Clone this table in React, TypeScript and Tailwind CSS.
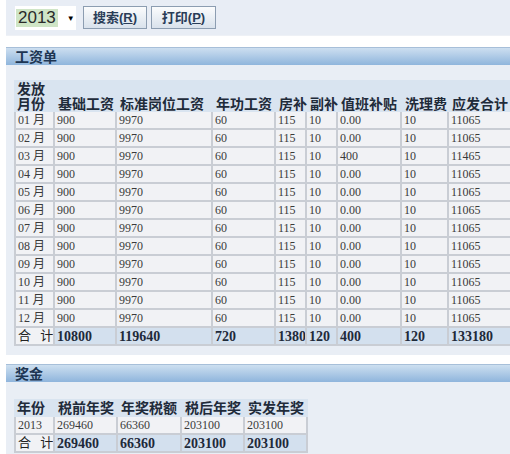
const cjk = "font-['Liberation_Serif','Noto_Sans_CJK_SC',serif]";
const cjkSans = "font-['Liberation_Sans','Noto_Sans_CJK_SC',sans-serif]";

const months = ['01', '02', '03', '04', '05', '06', '07', '08', '09', '10', '11', '12'];

const salaryCols = [
  'w-[41px]',
  'w-[62px]',
  'w-[96px]',
  'w-[63px]',
  'w-[31px]',
  'w-[31px]',
  'w-[64px]',
  'w-[47px]',
  'w-[70px]',
];

const bonusCols = ['w-[41px]', 'w-[63px]', 'w-[64px]', 'w-[63px]', 'w-[63px]'];

function Bar({ title }: { title: string }) {
  return (
    <div className="h-[18px] border-t border-[#a7bfd9] bg-gradient-to-b from-[#cddff0] to-[#8fb5dc] pl-[9px] flex items-center">
      <span className={`${cjkSans} text-[14px] font-bold text-[#1d3552] leading-none`}>{title}</span>
    </div>
  );
}

function Row({
  cells,
  cols,
  total,
}: {
  cells: string[];
  cols: string[];
  total?: boolean;
}) {
  return (
    <div className="flex h-[18px]">
      {cells.map((c, i) => {
        const first = i === 0;
        const bg = total && !first ? 'bg-[#d3e0ee]' : 'bg-[#f1f2f5]';
        const txt = total
          ? first
            ? 'text-[13px] text-[#222] tracking-[3px]'
            : 'text-[14px] font-bold text-[#1e2a3a]'
          : 'text-[12px] text-[#3a3a3a]';
        return (
          <div
            key={i}
            className={`${cols[i]} ${bg} ${first ? 'border-l-2' : ''} border-r-2 border-b-2 border-[#c9cdd4] pl-[2px] flex items-center shrink-0 overflow-hidden whitespace-nowrap ${cjk} ${txt}`}
          >
            {c}
          </div>
        );
      })}
    </div>
  );
}

export default function App() {
  return (
    <div className="w-[510px] h-[454px] bg-white pl-[6px] overflow-hidden">
      {/* toolbar */}
      <div className="h-[36px] bg-[#e8edf5] flex items-center pl-[9px] border-b border-[#eef1f6]">
        <div className="w-[61px] h-[24px] bg-white flex items-center pl-[1px]">
          <span className="bg-[#cfe5c6] px-[2px] h-[18px] flex items-center text-[17px] text-[#2a2a2a] font-['Liberation_Sans',sans-serif]">
            2013
          </span>
          <span className="ml-[9px] text-[8px] text-black">▼</span>
        </div>
        <button className="ml-[7px] w-[64px] h-[23px] border border-[#8c9db1] bg-gradient-to-b from-[#fbfcfd] to-[#d9e2ec] text-[13px] font-semibold text-[#2a3d58]">
          <span className={cjkSans}>
            搜索(<span className="underline">R</span>)
          </span>
        </button>
        <button className="ml-[4px] w-[65px] h-[23px] border border-[#8c9db1] bg-gradient-to-b from-[#fbfcfd] to-[#d9e2ec] text-[13px] font-semibold text-[#2a3d58]">
          <span className={cjkSans}>
            打印(<span className="underline">P</span>)
          </span>
        </button>
      </div>

      {/* salary panel */}
      <div className="mt-[11px]">
        <Bar title="工资单" />
        <div className="bg-[#e9eef5] pt-[15px] pb-[9px] pl-[8px]">
          <div className="flex h-[32px] bg-[#d9e4f0]">
            {['发放\n月份', '基础工资', '标准岗位工资', '年功工资', '房补', '副补', '值班补贴', '洗理费', '应发合计'].map(
              (h, i) => (
                <div
                  key={i}
                  className={`${salaryCols[i]} shrink-0 pl-[3px] flex items-end whitespace-pre-line leading-[15px] text-[14px] font-bold text-[#1f2b3a] ${cjkSans}`}
                >
                  {h}
                </div>
              )
            )}
          </div>
          {months.map((m) => (
            <Row
              key={m}
              cols={salaryCols}
              cells={[
                `${m} 月`,
                '900',
                '9970',
                '60',
                '115',
                '10',
                m === '03' ? '400' : '0.00',
                '10',
                m === '03' ? '11465' : '11065',
              ]}
            />
          ))}
          <Row
            total
            cols={salaryCols}
            cells={['合 计', '10800', '119640', '720', '1380', '120', '400', '120', '133180']}
          />
        </div>
      </div>

      {/* bonus panel */}
      <div className="mt-[9px]">
        <Bar title="奖金" />
        <div className="bg-[#e9eef5] pt-[17px] pb-[9px] pl-[8px]">
          <div className="flex h-[18px] w-[294px] bg-[#d9e4f0]">
            {['年份', '税前年奖', '年奖税额', '税后年奖', '实发年奖'].map((h, i) => (
              <div
                key={i}
                className={`${bonusCols[i]} shrink-0 pl-[3px] flex items-center text-[14px] font-bold text-[#1f2b3a] ${cjkSans}`}
              >
                {h}
              </div>
            ))}
          </div>
          <Row cols={bonusCols} cells={['2013', '269460', '66360', '203100', '203100']} />
          <Row total cols={bonusCols} cells={['合 计', '269460', '66360', '203100', '203100']} />
        </div>
      </div>
    </div>
  );
}
